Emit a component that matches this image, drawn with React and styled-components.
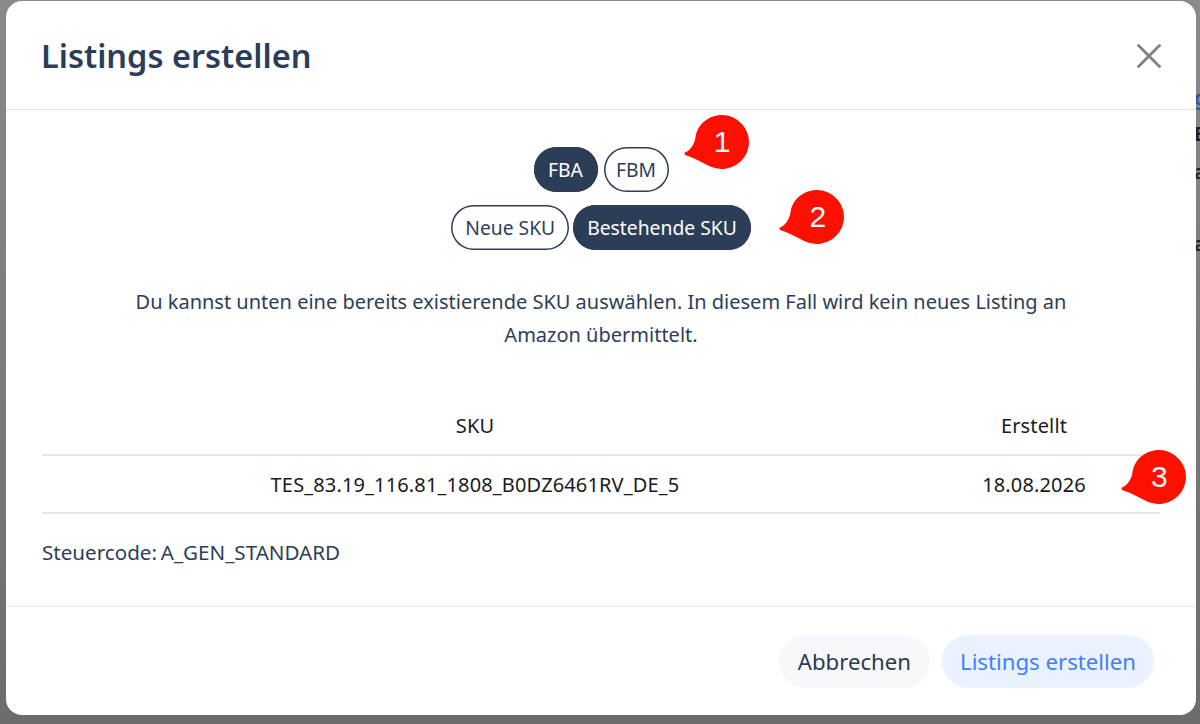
import React, { useState } from "react";
import styled, { createGlobalStyle } from "styled-components";

const GlobalStyle = createGlobalStyle`
  html, body {
    margin: 0;
    height: 100%;
  }
  body {
    font-family: "Noto Sans", "Open Sans", sans-serif;
    overflow: hidden;
  }
`;

const App = () => {
  const [channel, setChannel] = useState("FBA");
  const [skuMode, setSkuMode] = useState("existing");

  return (
    <Backdrop>
      <GlobalStyle />
      <PeekText $top={86} $blue>g</PeekText>
      <PeekText $top={122}>E</PeekText>
      <PeekText $top={160}>a</PeekText>
      <PeekText $top={232}>a</PeekText>
      <Modal>
        <Header>
          <Title>Listings erstellen</Title>
          <CloseButton aria-label="Schließen">
            <svg width="24" height="24" viewBox="0 0 24 24" fill="none">
              <path
                d="M1.5 1.5 22.5 22.5M22.5 1.5 1.5 22.5"
                stroke="#808080"
                strokeWidth="2.8"
                strokeLinecap="round"
              />
            </svg>
          </CloseButton>
        </Header>

        <Body>
          <Toggles>
            <ToggleRow $gap={6}>
              <Pill $width={64} $active={channel === "FBA"} onClick={() => setChannel("FBA")}>
                FBA
              </Pill>
              <Pill $width={65} $active={channel === "FBM"} onClick={() => setChannel("FBM")}>
                FBM
              </Pill>
              <Marker $left={150} $top={-32} number={1} />
            </ToggleRow>
            <ToggleRow $gap={4}>
              <Pill $active={skuMode === "new"} onClick={() => setSkuMode("new")}>
                Neue SKU
              </Pill>
              <Pill
                $active={skuMode === "existing"}
                onClick={() => setSkuMode("existing")}
              >
                Bestehende SKU
              </Pill>
              <Marker $left={328} $top={-15} number={2} />
            </ToggleRow>
          </Toggles>

          <Hint>
            Du kannst unten eine bereits existierende SKU auswählen. In diesem Fall
            wird kein neues Listing an Amazon übermittelt.
          </Hint>

          <SkuTable>
            <thead>
              <tr>
                <HeadCell>SKU</HeadCell>
                <HeadCell $narrow>Erstellt</HeadCell>
              </tr>
            </thead>
            <tbody>
              <tr>
                <Cell>TES_83.19_116.81_1808_B0DZ6461RV_DE_5</Cell>
                <Cell $narrow>
                  18.08.2026
                  <Marker $left={213} $top={-6} number={3} />
                </Cell>
              </tr>
            </tbody>
          </SkuTable>

          <TaxCode>Steuercode: A_GEN_STANDARD</TaxCode>
        </Body>

        <Footer>
          <FooterButton>Abbrechen</FooterButton>
          <FooterButton $primary>Listings erstellen</FooterButton>
        </Footer>
      </Modal>
    </Backdrop>
  );
};

const Marker = ({ number, ...rest }) => (
  <MarkerWrap {...rest}>
    <svg width="66" height="54" viewBox="0 0 66 54">
      <path
        d="M38 0A27 27 0 1 1 30 52.8C22 50.5 12 43 2.5 40.5.5 40-.4 38 1.5 37.2 7 35 11 28 11.5 22 13.5 9.5 24.5 0 38 0Z"
        fill="#fe1000"
      />
    </svg>
    <MarkerNumber>{number}</MarkerNumber>
  </MarkerWrap>
);

// PAGE

const Backdrop = styled.div`
  position: relative;
  box-sizing: border-box;
  width: 1200px;
  height: 724px;
  padding: 1px 4px 9px 6px;
  overflow: hidden;
  background: linear-gradient(#8a8a8a, #6c6c6c);
`;

const PeekText = styled.span`
  position: absolute;
  left: 1194px;
  top: ${props => props.$top}px;
  font-size: 20px;
  font-weight: 600;
  line-height: 24px;
  color: ${props => (props.$blue ? "#2b55a8" : "#1c1c1c")};
`;

const Modal = styled.div`
  position: relative;
  height: 714px;
  display: flex;
  flex-direction: column;
  background: #fff;
  border-radius: 16px;
  color: #2c3e57;
`;

// HEADER

const Header = styled.div`
  height: 106px;
  flex: none;
  display: flex;
  align-items: center;
  justify-content: space-between;
  padding: 2px 35px 0 35px;
  border-bottom: 1px solid #e4e6ec;
`;

const Title = styled.h2`
  margin: 0;
  font-size: 32.5px;
  font-weight: 600;
  line-height: 40px;
  color: #2c3e57;
`;

const CloseButton = styled.button`
  display: flex;
  padding: 0;
  border: 0;
  background: none;
  cursor: pointer;
`;

// BODY

const Body = styled.div`
  flex: 1;
  padding: 37px 36px 0;
`;

const Toggles = styled.div`
  display: flex;
  flex-direction: column;
  align-items: center;
  gap: 13px;
`;

const ToggleRow = styled.div`
  position: relative;
  display: flex;
  gap: ${props => props.$gap}px;
`;

const Pill = styled.button`
  box-sizing: border-box;
  height: 45px;
  width: ${props => (props.$width ? `${props.$width}px` : "auto")};
  padding: ${props => (props.$width ? "0" : "0 14px")};
  border: 0;
  border-radius: 23px;
  box-shadow: inset 0 0 0 1.5px #2c3e57;
  font-family: inherit;
  font-size: 19.3px;
  cursor: pointer;
  background: ${props => (props.$active ? "#2c3e57" : "#fff")};
  color: ${props => (props.$active ? "#fff" : "#2c3e57")};
`;

const MarkerWrap = styled.span`
  position: absolute;
  left: ${props => props.$left}px;
  top: ${props => props.$top}px;
  width: 66px;
  height: 54px;
`;

const MarkerNumber = styled.span`
  position: absolute;
  left: 11px;
  right: 0;
  top: 0;
  line-height: 54px;
  text-align: center;
  font-family: "Liberation Sans", sans-serif;
  font-size: 30px;
  color: #fff;
`;

const Hint = styled.p`
  margin: 35px 0 0;
  padding: 0 90px;
  font-size: 20px;
  line-height: 33px;
  text-align: center;
`;

const SkuTable = styled.table`
  width: 100%;
  margin-top: 45px;
  border-collapse: collapse;
  table-layout: fixed;
  color: #1a1a1a;
  font-size: 20px;
  letter-spacing: 0.14px;
`;

const HeadCell = styled.th`
  height: 58px;
  padding: 0;
  font-weight: 400;
  border-bottom: 2px solid #e4e6ec;
  width: ${props => (props.$narrow ? "252px" : "auto")};
`;

const Cell = styled.td`
  position: relative;
  height: 56px;
  padding: 0;
  text-align: center;
  border-bottom: 2px solid #e4e6ec;
`;

const TaxCode = styled.div`
  margin-top: 24px;
  font-size: 20.6px;
  word-spacing: -1.5px;
  line-height: 28px;
`;

// FOOTER

const Footer = styled.div`
  flex: none;
  height: 109px;
  box-sizing: border-box;
  display: flex;
  justify-content: flex-end;
  gap: 12px;
  padding: 28px 42px 0 0;
  border-top: 1px solid #e4e6ec;
`;

const FooterButton = styled.button`
  height: 53px;
  padding: 0 ${props => (props.$primary ? "18px" : "19px")};
  border: 0;
  border-radius: 27px;
  font-family: inherit;
  font-size: 22.2px;
  cursor: pointer;
  background: ${props => (props.$primary ? "#ebf2ff" : "#f7f8fb")};
  color: ${props => (props.$primary ? "#3f80ff" : "#2c3a50")};
`;

export default App;
